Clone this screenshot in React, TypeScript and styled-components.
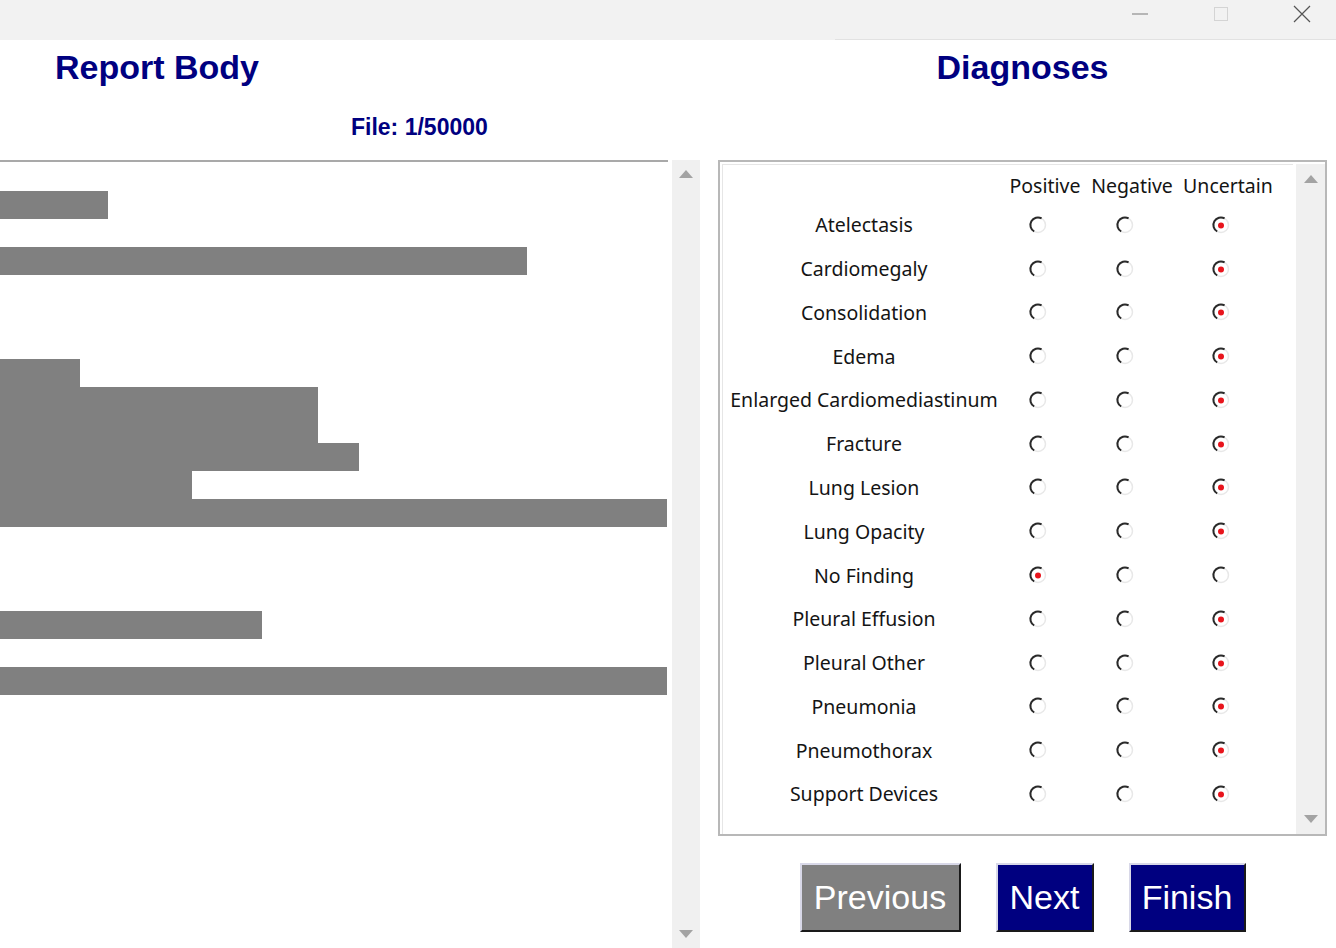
import React from "react";
import styled, { createGlobalStyle } from "styled-components";

const GlobalStyle = createGlobalStyle`
  html, body { margin: 0; padding: 0; background: #ffffff; }
  body { font-family: "Liberation Sans", Arial, sans-serif; }
  #root { width: 1336px; height: 948px; overflow: hidden; }
`;

const Window = styled.div`
  width: 1336px;
  height: 948px;
  display: flex;
  flex-direction: column;
  background: #ffffff;
`;

const TitleBar = styled.div`
  height: 40px;
  flex: none;
  background: #f2f2f2;
  display: flex;
  justify-content: flex-end;
  gap: 13px;
  position: relative;
  &::after {
    content: "";
    position: absolute;
    left: 835px;
    right: 0;
    bottom: 0;
    height: 1px;
    background: #e2e2e2;
  }
`;

const Control = styled.div`
  width: 68px;
  height: 28px;
  display: flex;
  align-items: center;
  justify-content: center;
`;

const Main = styled.div`
  flex: 1;
  display: flex;
  min-height: 0;
`;

const LeftPane = styled.div`
  width: 700px;
  flex: none;
  display: flex;
  flex-direction: column;
`;

const PaneTitle = styled.h1<{ $center?: boolean }>`
  margin: 7px 0 0;
  height: 40px;
  line-height: 40px;
  font-size: 34px;
  font-weight: 700;
  color: #000080;
  font-family: "Liberation Sans", Arial, sans-serif;
  padding-left: ${(p) => (p.$center ? "0" : "55px")};
  text-align: ${(p) => (p.$center ? "center" : "left")};
`;

const FileLabel = styled.div`
  margin-top: 28px;
  height: 24px;
  line-height: 24px;
  padding-left: 351px;
  font-size: 23px;
  font-weight: 700;
  color: #000080;
`;

const ReportArea = styled.div`
  margin-top: 21px;
  flex: 1;
  display: flex;
  gap: 4px;
  min-height: 0;
`;

const ReportText = styled.div`
  width: 668px;
  border-top: 2px solid #a9a9a9;
  padding-top: 29px;
  display: flex;
  flex-direction: column;
`;

const Redacted = styled.div`
  height: 28px;
  flex: none;
  background: #808080;
`;

const Scrollbar = styled.div<{ $width: number; $pad: number }>`
  width: ${(p) => p.$width}px;
  flex: none;
  background: #f0f0f0;
  display: flex;
  flex-direction: column;
  justify-content: space-between;
  align-items: center;
  padding: ${(p) => p.$pad}px 0;
`;

const Arrow = styled.div<{ $down?: boolean }>`
  width: 0;
  height: 0;
  border-left: 7px solid transparent;
  border-right: 7px solid transparent;
  ${(p) =>
    p.$down
      ? "border-top: 8px solid #a3a3a3;"
      : "border-bottom: 8px solid #a3a3a3;"}
`;

const RightPane = styled.div`
  flex: 1;
  display: flex;
  flex-direction: column;
  padding: 0 9px 0 18px;
`;

const Panel = styled.div`
  margin-top: 73px;
  height: 676px;
  box-sizing: border-box;
  border: 2px solid #b8b8b8;
  padding: 2px 0 0 2px;
  display: flex;
`;

const List = styled.div`
  flex: 1;
  border-top: 1px solid #e6e6e6;
  border-left: 1px solid #e6e6e6;
  display: grid;
  grid-template-columns: 278px 82px 92px 100px;
  grid-auto-rows: 43.77px;
  grid-template-rows: 38px;
  align-content: start;
  margin-right: 3px;
  font-family: "Noto Sans", "Open Sans", sans-serif;
  font-size: 19.5px;
  color: #141414;
`;

const HeaderCell = styled.div`
  display: flex;
  align-items: center;
  justify-content: center;
  padding: 2px 0 0 6px;
  white-space: nowrap;
`;

const LabelCell = styled.div`
  display: flex;
  align-items: center;
  justify-content: center;
  white-space: nowrap;
  padding-left: 4px;
`;

const RadioCell = styled.div`
  display: flex;
  align-items: center;
  justify-content: center;
`;

const RadioIcon = styled.svg`
  width: 20px;
  height: 20px;
  margin-right: 8px;
`;

const ButtonRow = styled.div`
  margin-top: 27px;
  display: flex;
  justify-content: center;
  gap: 35px;
`;

const ActionButton = styled.button<{ $bg: string; $w: number }>`
  width: ${(p) => p.$w}px;
  height: 69px;
  box-sizing: border-box;
  background: ${(p) => p.$bg};
  color: #ffffff;
  font-family: "Liberation Sans", Arial, sans-serif;
  font-size: 34px;
  padding: 0;
  border-top: 2px solid #d8d8e8;
  border-left: 2px solid #d8d8e8;
  border-right: 2px solid #1a1a1a;
  border-bottom: 2px solid #1a1a1a;
  cursor: pointer;
`;

const Radio = ({ checked }: { checked: boolean }) => (
  <RadioIcon viewBox="0 0 20 20">
    <circle cx="10" cy="10" r="7.5" fill="#ffffff" stroke="#e8e8e8" strokeWidth="1.5" />
    <path d="M6.2 16.5 A7.5 7.5 0 0 1 13.6 3.4" fill="none" stroke="#2a2a2a" strokeWidth="2" />
    {checked && <circle cx="10" cy="10.5" r="3" fill="#e8141c" />}
  </RadioIcon>
);

const lines = [108, 0, 527, 0, 0, 0, 80, 318, 318, 359, 192, 667, 0, 0, 0, 262, 0, 667];

type Status = "P" | "N" | "U";
const diagnoses: [string, Status][] = [
  ["Atelectasis", "U"],
  ["Cardiomegaly", "U"],
  ["Consolidation", "U"],
  ["Edema", "U"],
  ["Enlarged Cardiomediastinum", "U"],
  ["Fracture", "U"],
  ["Lung Lesion", "U"],
  ["Lung Opacity", "U"],
  ["No Finding", "P"],
  ["Pleural Effusion", "U"],
  ["Pleural Other", "U"],
  ["Pneumonia", "U"],
  ["Pneumothorax", "U"],
  ["Support Devices", "U"],
];

export default function App() {
  return (
    <>
      <GlobalStyle />
      <Window>
        <TitleBar>
          <Control>
            <svg width="18" height="4" viewBox="0 0 18 4">
              <line x1="1" y1="2" x2="17" y2="2" stroke="#7a7a7a" strokeWidth="1" />
            </svg>
          </Control>
          <Control>
            <svg width="16" height="16" viewBox="0 0 16 16">
              <rect x="1.5" y="1.5" width="13" height="13" fill="none" stroke="#d4d4d4" strokeWidth="1" />
            </svg>
          </Control>
          <Control>
            <svg width="20" height="20" viewBox="0 0 20 20">
              <path d="M2 2 L18 18 M18 2 L2 18" stroke="#555555" strokeWidth="1.2" fill="none" />
            </svg>
          </Control>
        </TitleBar>
        <Main>
          <LeftPane>
            <PaneTitle>Report Body</PaneTitle>
            <FileLabel>File: 1/50000</FileLabel>
            <ReportArea>
              <ReportText>
                {lines.map((w, i) => (
                  <Redacted key={i} style={{ width: `${w}px` }} />
                ))}
              </ReportText>
              <Scrollbar $width={28} $pad={10}>
                <Arrow />
                <Arrow $down />
              </Scrollbar>
            </ReportArea>
          </LeftPane>
          <RightPane>
            <PaneTitle $center>Diagnoses</PaneTitle>
            <Panel>
              <List>
                <HeaderCell />
                <HeaderCell>Positive</HeaderCell>
                <HeaderCell>Negative</HeaderCell>
                <HeaderCell>Uncertain</HeaderCell>
                {diagnoses.map(([name, s]) => (
                  <React.Fragment key={name}>
                    <LabelCell>{name}</LabelCell>
                    <RadioCell><Radio checked={s === "P"} /></RadioCell>
                    <RadioCell><Radio checked={s === "N"} /></RadioCell>
                    <RadioCell><Radio checked={s === "U"} /></RadioCell>
                  </React.Fragment>
                ))}
              </List>
              <Scrollbar $width={29} $pad={11}>
                <Arrow />
                <Arrow $down />
              </Scrollbar>
            </Panel>
            <ButtonRow>
              <ActionButton $bg="#808080" $w={161}>Previous</ActionButton>
              <ActionButton $bg="#000080" $w={98}>Next</ActionButton>
              <ActionButton $bg="#000080" $w={117}>Finish</ActionButton>
            </ButtonRow>
          </RightPane>
        </Main>
      </Window>
    </>
  );
}
